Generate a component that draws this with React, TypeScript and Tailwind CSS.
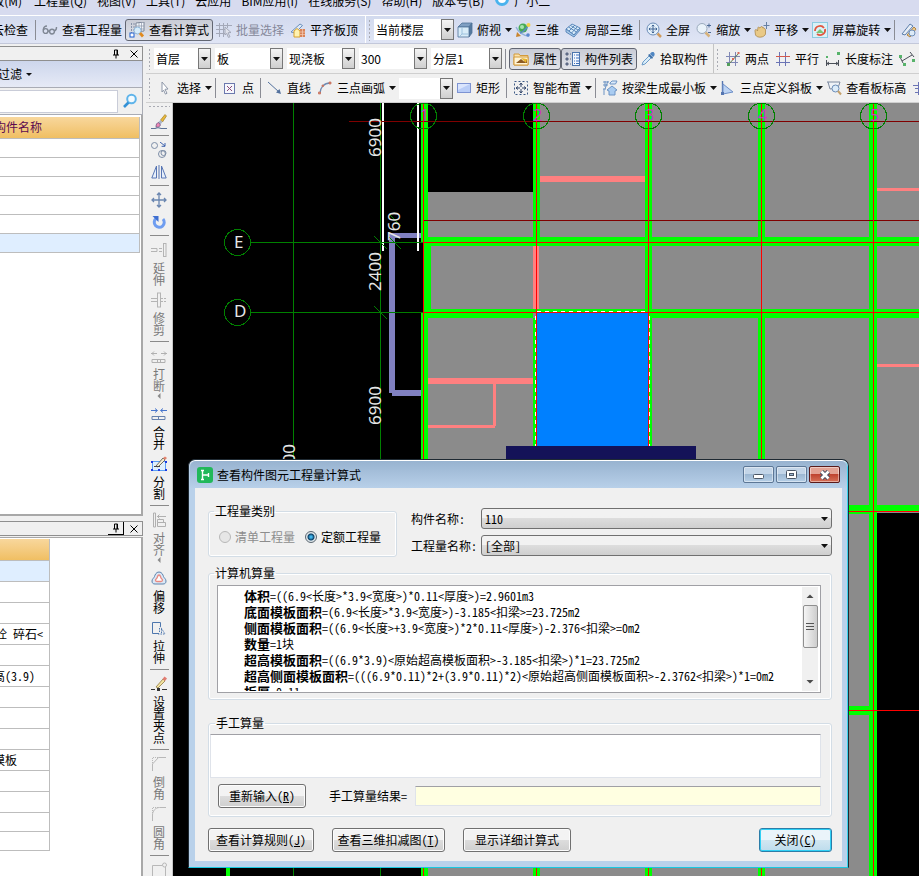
import type { ReactNode } from "react";
import clsx from "clsx";

/* ---------- Icons ---------- */

const icons: Record<string, ReactNode> = {
  glasses: (
    <g fill="none" stroke="#7f8794" strokeWidth="1.4">
      <circle cx="3.6" cy="9" r="2.4" />
      <circle cx="10" cy="9.6" r="2.4" />
      <path d="M1.3 8C1.5 5.5 3 4 5 4M6 9l1.6.3M12.3 9c1.5-.5 2.3-2 2.2-4" />
    </g>
  ),
  calc: (
    <g>
      <path d="M2.5 1v12M5 1v8" stroke="#8793a8" strokeDasharray="2 1" />
      <path d="M7 1l8-1v9l-8 1z" fill="#f3f6fb" stroke="#7b8597" />
      <path d="M7 4h8M7 7h8M10 1v9M12.500 1v9" stroke="#8e98aa" strokeWidth=".7" />
      <rect x="1" y="11" width="4" height="4" fill="#fff" stroke="#1d5fd0" />
      <circle cx="8.500" cy="8.500" r="3.500" fill="#d7ecfa" stroke="#8fb6d8" />
      <path d="M11 11l3 3.500" stroke="#e08a1e" strokeWidth="2.800" />
    </g>
  ),
  batch: (
    <g fill="none" stroke="#a3a8b8">
      <path d="M0 3.500h16M0 7.500h9M0 11.500h9M3.500 1v14M7.500 1v14M11.500 1v5" />
      <path d="M9 5l6 5.500-3 .3 2 4-1.600.6-1.700-4L9 13z" fill="#dfe2ec" />
    </g>
  ),
  house: (
    <g>
      <path d="M1 10l9-8 2.500 1.500L5 11z" fill="#dfe9f5" stroke="#6a8fbd" />
      <path d="M4 15V9l3-2.500L10 9v6z" fill="#fff3b0" stroke="#d9a12a" />
      <path d="M10 7h5v8h-5z" fill="#d98357" />
      <path d="M10 10h5M10 12.500h5M12.500 7v8" stroke="#f3cdb8" strokeWidth=".7" />
    </g>
  ),
  cube: (
    <g stroke="#4f7298" strokeWidth=".8">
      <path d="M1 5l4-4h10l-3 4z" fill="#7f9fc2" />
      <path d="M12 5l3-4v10l-3 4z" fill="#55799f" />
      <path d="M1 5h11v10H1z" fill="#d8ecf8" />
      <path d="M5 6v6h6M5 12l-3 3" fill="none" stroke="#8fb8d6" />
    </g>
  ),
  orbit: (
    <g>
      <circle cx="8" cy="6" r="4.500" fill="#46ab55" />
      <circle cx="7" cy="5" r="2" fill="#a7e3ae" />
      <path d="M1 5c2 5 8 9 13 9" fill="none" stroke="#8fb0d8" strokeWidth="1.400" />
      <path d="M5 11c3-1 7-5 9-9" fill="none" stroke="#5b8ac4" strokeWidth="1.600" />
      <circle cx="13.500" cy="3" r="2" fill="#f3d24b" />
      <circle cx="13" cy="13" r="1.800" fill="#5b87cf" />
      <path d="M1 15l1-5 4 4z" fill="#c9852f" />
    </g>
  ),
  part3d: (
    <g fill="#d8ebf9" stroke="#4f7fb5" strokeWidth=".9">
      <path d="M1 7l6-5 8 4-6 7z" />
      <path d="M1 7v3l8 5 6-7V6l-6 7z" fill="#a9cbe9" />
      <path d="M3.500 5l8 5M5.500 3.500l7.500 4.500M4 9l6-6M6.500 11l6-6.500" fill="none" />
    </g>
  ),
  full: (
    <g>
      <circle cx="7" cy="7" r="6" fill="#e5f1fb" stroke="#6c8db8" />
      <path d="M7 3v8M3 7h8M5.700 4.200L7 3l1.300 1.200M5.700 9.800L7 11l1.300-1.200M4.200 5.700L3 7l1.200 1.300M9.800 5.700L11 7l-1.200 1.300" fill="none" stroke="#3f6393" />
      <path d="M11.500 11.500L15 15" stroke="#cf9b5d" strokeWidth="2.500" />
    </g>
  ),
  zoom: (
    <g>
      <circle cx="6" cy="6.500" r="5" fill="#e9f2fa" stroke="#9aaabd" />
      <path d="M9.500 10.500l4 4" stroke="#d6b27a" strokeWidth="2.500" />
      <path d="M11 3.500h4M13 1.500v4M12 10.500h3" stroke="#4c6b96" />
    </g>
  ),
  hand: (
    <g>
      <path d="M1 9c0-2 1.500-2 2.500 0L4 5.500c.5-1 1.500-.5 1.500.5L7 5c.7-1 1.700-.5 1.500.7 1-.7 1.600 0 1.500 1 1-.3 1.500.3 1.500 1.300V12c-1 3.500-8 4.500-10 1z" fill="#e9c987" stroke="#ad8a4c" strokeWidth=".8" />
      <path d="M12.500 0v7M9.500 3.500h6" stroke="#6680a5" />
    </g>
  ),
  rotate: (
    <g>
      <rect x=".5" y=".5" width="15" height="15" fill="#d9f1f7" stroke="#8ccbe0" />
      <path d="M3 9a5 5 0 019-3" fill="none" stroke="#e2553f" strokeWidth="1.800" />
      <path d="M13 7a5 5 0 01-8 5" fill="none" stroke="#e2553f" strokeWidth="1.800" />
      <path d="M4 11l4-4 4 4z" fill="#7cc576" />
    </g>
  ),
  wand: (
    <g>
      <path d="M1 12l8-10 3 2-8 9z" fill="#e8eef6" stroke="#5d7fab" />
      <path d="M6 13l7-8 2 2-6 8z" fill="#f0c987" stroke="#ae8443" />
      <circle cx="11" cy="11" r="3" fill="#dceaf7" stroke="#6f8fb8" />
    </g>
  ),
  props: (
    <g>
      <path d="M1 3h5l1 1.500h8V14H1z" fill="#fbe3ae" stroke="#d39a3a" />
      <path d="M1 6h14v8H1z" fill="#fff4d6" stroke="#d39a3a" />
      <path d="M3 12l5-4 3 2.500 3-2.500v4z" fill="#8d5a22" />
      <path d="M8 7l6 1-1 4z" fill="#e8b52b" />
    </g>
  ),
  list: (
    <g>
      <path d="M1 2h2v2H1zM1 7h2v2H1zM1 12h2v2H1zM5 3h1M5 8h1M5 13h1" fill="#5e6b86" stroke="#5e6b86" />
      <rect x="7.500" y="1.500" width="7" height="13" fill="#f4f8fd" stroke="#4d76ad" />
      <path d="M9 4h1M11 4h3M9 7h1M11 7h3M9 10h1M11 10h3M9 12.500h1M11 12.500h3" stroke="#3c6fc0" />
    </g>
  ),
  dropper: (
    <g>
      <path d="M2 14l1-3 6-6 2 2-6 6z" fill="#d9edf9" stroke="#6d9cc8" />
      <path d="M8 4l1.500-1L13 6.500 12 8z" fill="#3d6ea6" />
      <path d="M10 3c1-2 3-2.500 4-1.500S15 5 13 6z" fill="#5187c2" />
    </g>
  ),
  twoPoint: (
    <g fill="none">
      <path d="M1 5.500h14M1 11.500h12M4.500 1v14M10.500 1v14" stroke="#8088b5" />
      <path d="M3 14L14 2" stroke="#5e7a4a" />
      <path d="M2 12h3v3H2z" fill="#54a05c" />
      <path d="M7 7h2v2H7zM12.500 1h2v2h-2z" fill="#d86b5a" />
    </g>
  ),
  parallel: (
    <g fill="none" stroke="#6b74b5">
      <path d="M4.500 1v14M10.500 1v14M1 11.500h14" />
      <path d="M1 5.500h14" stroke="#d4594c" />
    </g>
  ),
  length: (
    <g>
      <path d="M1.500 9v6M13.500 9v6M2 12.500h11M4 11l-2 1.500L4 14M11 11l2 1.500-2 1.500" fill="none" stroke="#4a4f58" />
      <path d="M1 5h2v2H1zM12 1h3v3h-3z" fill="#57b36a" />
    </g>
  ),
  slant: (
    <g>
      <path d="M1 6l3 6M11 1l4 5M3 10l10-6" fill="none" stroke="#4a4f58" />
      <path d="M0 4h3v3H0zM4 12h3v3H4zM13 8h3v3h-3z" fill="#57b36a" />
    </g>
  ),
  cursor: <path d="M5 2l6 7-3 .3 2 4-1.600.8-1.800-4L5 12z" fill="#fff" stroke="#8e97a8" />,
  point: (
    <g fill="none">
      <rect x="2.500" y="3.500" width="10" height="10" fill="#f6f7fc" stroke="#6c79ae" />
      <path d="M5 6l5 5M10 6l-5 5" stroke="#8a4a78" />
    </g>
  ),
  line: (
    <g>
      <path d="M1 2l11 10" stroke="#52709d" fill="none" />
      <path d="M14 14l-5-1.500 3.500-3.500z" fill="#52709d" />
    </g>
  ),
  arc: (
    <g fill="none">
      <path d="M3 13C3 8 7 3 13 3" stroke="#6f8bb2" strokeWidth="1.300" />
      <path d="M1.500 12h2v2h-2zM5 5h1.500v1.500H5zM12 2h2v2h-2z" fill="#d98b76" stroke="#c46b56" strokeWidth=".7" />
    </g>
  ),
  rect: (
    <g>
      <rect x="1.500" y="3.500" width="13" height="9" fill="#b9cdf7" stroke="#7d93d2" />
      <path d="M2 4h12L2 10z" fill="#dae5fd" />
    </g>
  ),
  smart: (
    <g fill="none">
      <rect x="1.500" y="1.500" width="13" height="13" stroke="#3d5a86" strokeDasharray="2 2" />
      <path d="M8 3v4M8 9v4M3 8h4M9 8h4M6.500 5L8 3l1.500 2M6.500 11L8 13l1.500-2M5 6.500L3 8l2 1.500M11 6.500L13 8l-2 1.500" stroke="#33476b" />
    </g>
  ),
  beam: (
    <g fill="none" stroke="#6d94c4">
      <path d="M1 2h6M1 5h5M3 1v6M1 9h3M6 1l-3 8M2 9v6" />
      <path d="M8 3l2-2h5l-1.500 3H8z" fill="#dbeafa" />
      <path d="M5 10l5-4 5 4-2 1v4H7v-4z" fill="#a9ccf1" />
    </g>
  ),
  slope: (
    <g>
      <path d="M2.500 1v13" stroke="#5575b0" strokeWidth="1.400" />
      <path d="M3 4l10 8-10 2z" fill="#bcd3f3" stroke="#6e90c9" />
      <path d="M1 12h3v3H1z" fill="#5575b0" />
    </g>
  ),
  height: (
    <g>
      <path d="M1 2h13M2 2l2 7 8-1 2-6" fill="#eef2f7" stroke="#7d8aa0" />
      <circle cx="9.500" cy="8.500" r="3.500" fill="#dcecf9" stroke="#6b8db8" />
      <path d="M12 11l3 3.500" stroke="#c4a06b" strokeWidth="2" />
    </g>
  ),
  grid: <path d="M3 8.500h12M3 12.500h12M6.500 2v13M11.500 5v10M1 5.500h8" fill="none" stroke="#6b74b5" />,
  search: (
    <g fill="none">
      <circle cx="9.500" cy="6" r="4.300" fill="#f2faff" stroke="#5fb4ea" strokeWidth="2" />
      <path d="M6.500 9.500L2 14" stroke="#3391d6" strokeWidth="2.600" />
    </g>
  ),
  brush: (
    <g>
      <path d="M9.500 6L14 .5 15.500 2 11.500 8z" fill="#e9b93a" stroke="#947222" strokeWidth=".6" />
      <path d="M7 8.500L9.500 6l2 2L9 11z" fill="#aab5c8" />
      <path d="M5 13c0-3 1-4 2.500-4.500L9.500 11C8.500 13 7 13.500 5 13z" fill="#ee86b3" stroke="#5f4d7c" strokeWidth=".7" />
      <path d="M0 14.500h4M10 14.500h6M4 14.500c2-1 4-1 6 0" fill="none" stroke="#5d7396" strokeWidth="1.200" />
    </g>
  ),
  copy: (
    <g fill="none" stroke="#7d8da6">
      <circle cx="3.500" cy="3.500" r="3" />
      <circle cx="11" cy="12" r="3.500" />
      <circle cx="12.500" cy="11" r="2.500" />
      <path d="M9 0l5 4M14 1v3.300h-3.400" stroke="#3e62ad" />
    </g>
  ),
  mirror: (
    <g fill="#e8f0fb" stroke="#5876b4">
      <path d="M5.500 2v12H.8zM10.500 2v12h4.700z" />
      <path d="M8 1v14" />
    </g>
  ),
  move: <path d="M8 1v14M1 8h14M6 3l2-2 2 2M6 13l2 2 2-2M3 6L1 8l2 2M13 6l2 2-2 2" fill="none" stroke="#6a86b0" strokeWidth="1.300" />,
  turn: (
    <g>
      <path d="M12 5a5 5 0 11-7-.5" fill="none" stroke="#6f9df0" strokeWidth="3" />
      <path d="M1.500 2h6v6z" fill="#3f6fd0" />
    </g>
  ),
  extend: (
    <g fill="none" stroke="#b4b4b4">
      <path d="M0 6.500h6v3H0M8 6.500h3M8 9.500h3" />
      <rect x="12.500" y="1.500" width="2.500" height="13" />
    </g>
  ),
  trim: (
    <g fill="none" stroke="#b4b4b4">
      <path d="M0 6.500h6M0 9.500h6" />
      <path d="M10 6.500h6M10 9.500h6" strokeDasharray="2 1" />
      <rect x="6.500" y="1" width="3" height="14" />
    </g>
  ),
  breakIt: (
    <g fill="none" stroke="#b0b0b0">
      <path d="M0 5.500h6M3 3.500l-2 2 2 2M10 5.500h6M13 3.500l2 2-2 2" />
      <path d="M1 11.500h13v3H1zM6.500 11v4M9.500 11v4" />
    </g>
  ),
  merge: (
    <g fill="none" stroke="#4775cc">
      <path d="M0 4.500h6M4 2.500l2.500 2L4 6.500M16 4.500h-6M12 2.500l-2.500 2 2.500 2" />
      <path d="M1 10.500h13v3H1zM7.500 10v4" stroke="#6681ad" />
    </g>
  ),
  split: (
    <g>
      <path d="M1.500 5.500h13v9h-13z" fill="#e1f0fd" stroke="#5aa0f5" />
      <path d="M0 5h2v2H0zM14 5h2v2h-2zM0 13h2v2H0zM14 13h2v2h-2zM7 13h2v2H7z" fill="#1e3be0" />
      <path d="M5 10l7-8 2 2-7 7z" fill="#f4ecd2" stroke="#4c4c44" strokeWidth=".8" />
      <path d="M12 2l2-1.500L16 2l-2 2z" fill="#e2836e" />
      <path d="M3 10.500h6" stroke="#444" />
    </g>
  ),
  align: (
    <g fill="none" stroke="#b0b0b0">
      <path d="M2.500 1v14h2V1zM6 4.500h9M8.500 2.500l-2 2 2 2M6.500 7.500h6v3h-6zM6.500 10.500h8v4h-8z" />
    </g>
  ),
  offset: (
    <g fill="none">
      <path d="M8 2c3 0 4 3 4.500 4.500S15 9 15 11s-1 3-3 3H4c-2 0-3-1-3-3s2-3 2.500-4.500S5 2 8 2z" fill="#dbe8f6" stroke="#5e83ad" />
      <path d="M8 5c1.500 0 1.500 2 2 3s1.500 1 1.500 2-.5 1.500-1.500 1.500H6c-1 0-1.500-.5-1.500-1.500S5.500 9 6 8s.5-3 2-3z" fill="#fff" stroke="#e88a82" strokeWidth="1.300" />
    </g>
  ),
  stretch: (
    <g fill="none" stroke="#4d76ad">
      <path d="M9.500 2.500h-8v11H8M9.500 2.500v4" />
      <path d="M9 6l5 8H7M8.500 8v5M10.500 9v4" strokeDasharray="1.500 1" />
    </g>
  ),
  grip: (
    <g>
      <path d="M5 11l7-8 2 2-7 7z" fill="#f2e29e" stroke="#826c33" strokeWidth=".7" />
      <path d="M11.500 3l2-2.500L16 2.500 14 5z" fill="#e27c72" />
      <path d="M0 13.500h4M11 13.500h5" stroke="#333" />
      <path d="M6 12h3v3H6z" fill="#333" />
    </g>
  ),
  chamfer: (
    <g fill="none" stroke="#b8b8b8">
      <path d="M1.500 15V8l6-6.500H15" />
      <path d="M1.500 7V1.500H7" strokeDasharray="1 1" />
    </g>
  ),
  fillet: (
    <g fill="none" stroke="#b8b8b8">
      <path d="M1.500 15V9c0-4 3-7.500 7-7.500H15" />
      <path d="M1.500 7V1.500H7" strokeDasharray="1 1" />
    </g>
  ),
  corner: (
    <g fill="none" stroke="#b8b8b8">
      <path d="M1.500 16V3.500H11M14.500 5v11" />
      <circle cx="13.500" cy="3" r="2" />
    </g>
  ),
  user: (
    <g>
      <circle cx="8" cy="8" r="7" fill="#4ab3ee" />
      <circle cx="8" cy="8" r="4" fill="#fff" />
      <path d="M5 8h6" stroke="#4ab3ee" />
    </g>
  ),
};

function Icon({ name }: { name: string }) {
  return (
    <svg viewBox="0 0 16 16" className="size-4 shrink-0" aria-hidden="true">
      {icons[name]}
    </svg>
  );
}

function Caret() {
  return (
    <svg viewBox="0 0 7 4" className="h-1 w-[7px] shrink-0" aria-hidden="true">
      <path d="M0 0h7L3.500 4z" fill="#111" />
    </svg>
  );
}

/* ---------- Toolbars ---------- */

interface ToolProps {
  icon?: string;
  label?: string;
  menu?: boolean;
  pressed?: boolean;
  disabled?: boolean;
}

function Tool({ icon, label, menu, pressed, disabled }: ToolProps) {
  return (
    <button
      type="button"
      disabled={disabled}
      aria-pressed={pressed}
      aria-label={label ?? icon}
      className={clsx(
        "flex h-[22px] shrink-0 items-center gap-1 pl-[3px]",
        !menu && "pr-[3px]",
        pressed && "rounded-[3px] border border-[#626672] bg-linear-to-b from-[#c9ccd6] to-[#e2e4ea]",
        disabled && "text-[#85889a]",
      )}
    >
      {icon && <Icon name={icon} />}
      {label && <span>{label}</span>}
      {menu && <Caret />}
    </button>
  );
}

function Sep() {
  return <div className="mx-[3px] h-5 w-px shrink-0 bg-[#8a8c94]" />;
}

function Grip() {
  return <div className="mr-[3px] ml-[2px] h-[22px] w-[3px] shrink-0 bg-[radial-gradient(#a9abb3_1px,transparent_1px)] bg-size-[3px_4px]" />;
}

function Combo({ label, value, className }: { label: string; value: string; className: string }) {
  return (
    <div className={clsx("relative h-[21px] shrink-0 bg-white", className)}>
      <select aria-label={label} className="size-full appearance-none pr-4 pl-[2px] outline-none">
        <option>{value}</option>
      </select>
      <span className="pointer-events-none absolute inset-y-0 right-0 flex w-[13px] items-center justify-center border border-[#777] bg-linear-to-b from-[#f4f4f4] to-[#cfcfcf]">
        <Caret />
      </span>
    </div>
  );
}

const menus = ["工程量(Q)", "视图(V)", "工具(T)", "云应用", "BIM应用(I)", "在线服务(S)", "帮助(H)", "版本号(B)"];

function MenuBar() {
  return (
    <nav className="flex h-[15px] shrink-0 items-end gap-[10px] overflow-hidden bg-[#d7dbef] pb-2 leading-3">
      <a href="#modify" className="flex w-6 justify-end pr-[2px]">修改(M)</a>
      {menus.map((m) => (
        <a key={m} href={`#${m}`} className="shrink-0">{m}</a>
      ))}
      <a href="#user" className="flex shrink-0 items-end gap-1">
        <Icon name="user" />
        广小二
      </a>
    </nav>
  );
}

function MainToolbar() {
  return (
    <div className="flex h-[29px] shrink-0 items-center overflow-hidden border-t border-b border-t-white border-b-[#c3c8da] bg-linear-to-b from-[#d2daee] to-[#e0e5f5]">
      <button type="button" className="flex w-8 shrink-0 justify-end pr-1">云检查</button>
      <Sep />
      <Tool icon="glasses" label="查看工程量" />
      <Tool icon="calc" label="查看计算式" pressed />
      <Tool icon="batch" label="批量选择" disabled />
      <Tool icon="house" label="平齐板顶" />
      <div className="ml-1 h-full w-px shrink-0 bg-white" />
      <Grip />
      <Combo label="当前楼层" value="当前楼层" className="w-20" />
      <Tool icon="cube" label="俯视" menu />
      <Tool icon="orbit" label="三维" />
      <Tool icon="part3d" label="局部三维" />
      <Sep />
      <Tool icon="full" label="全屏" />
      <Tool icon="zoom" label="缩放" menu />
      <Tool icon="hand" label="平移" menu />
      <Tool icon="rotate" label="屏幕旋转" menu />
      <Sep />
      <Tool icon="wand" />
    </div>
  );
}

function FloorToolbar() {
  return (
    <div className="flex h-[30px] shrink-0 items-center overflow-hidden border-b border-[#cfcfcf]">
      <Grip />
      <div className="flex shrink-0 gap-1">
        <Combo label="楼层" value="首层" className="w-[57px]" />
        <Combo label="构件类别" value="板" className="w-[68px]" />
        <Combo label="构件类型" value="现浇板" className="w-[68px]" />
        <Combo label="构件" value="300" className="w-[68px]" />
        <Combo label="分层" value="分层1" className="w-[71px]" />
      </div>
      <Sep />
      <Tool icon="props" label="属性" pressed />
      <Tool icon="list" label="构件列表" pressed />
      <Tool icon="dropper" label="拾取构件" />
      <div className="ml-[2px] h-full w-px shrink-0 bg-[#c4c4c4]" />
      <Grip />
      <Tool icon="twoPoint" label="两点" />
      <Tool icon="parallel" label="平行" />
      <Tool icon="length" label="长度标注" />
      <Tool icon="slant" />
    </div>
  );
}

function DrawToolbar() {
  return (
    <div className="flex h-[29px] shrink-0 items-center overflow-hidden border-b border-[#cfcfcf]">
      <Grip />
      <Tool icon="cursor" label="选择" menu />
      <Sep />
      <Tool icon="point" label="点" />
      <Sep />
      <Tool icon="line" label="直线" />
      <Tool icon="arc" label="三点画弧" menu />
      <Combo label="画弧方式" value="" className="ml-[3px] w-[54px]" />
      <Tool icon="rect" label="矩形" />
      <Sep />
      <Tool icon="smart" label="智能布置" menu />
      <Sep />
      <Tool icon="beam" label="按梁生成最小板" menu />
      <Tool icon="slope" label="三点定义斜板" menu />
      <Tool icon="height" label="查看板标高" />
      <Tool icon="grid" />
    </div>
  );
}

const editTools: (ToolProps | null)[] = [
  { icon: "brush" },
  null,
  { icon: "copy" },
  { icon: "mirror" },
  null,
  { icon: "move" },
  { icon: "turn" },
  null,
  { icon: "extend", label: "延伸", disabled: true },
  { icon: "trim", label: "修剪", disabled: true },
  null,
  { icon: "breakIt", label: "打断", disabled: true, menu: true },
  { icon: "merge", label: "合并" },
  { icon: "split", label: "分割" },
  null,
  { icon: "align", label: "对齐", disabled: true, menu: true },
  { icon: "offset", label: "偏移" },
  { icon: "stretch", label: "拉伸" },
  null,
  { icon: "grip", label: "设置夹点" },
  null,
  { icon: "chamfer", label: "倒角", disabled: true },
  { icon: "fillet", label: "圆角", disabled: true },
  null,
  { icon: "corner" },
];

function EditToolbar() {
  return (
    <div className="flex w-[27px] shrink-0 flex-col items-center overflow-hidden border-r border-[#c8c8c8]">
      <div className="mt-[2px] mb-[3px] h-[3px] w-[22px] shrink-0 bg-[radial-gradient(#a9abb3_1px,transparent_1px)] bg-size-[4px_3px]" />
      {editTools.map((t, i) =>
        t === null ? (
          <div key={i} className="mt-[2px] mb-[3px] h-px w-[19px] shrink-0 bg-[#8a8a8a]" />
        ) : (
          <button
            key={i}
            type="button"
            disabled={t.disabled}
            aria-label={t.label ?? t.icon}
            className={clsx("flex shrink-0 flex-col items-center py-[3px]", t.disabled && "text-[#7a7a7a]")}
          >
            <Icon name={t.icon!} />
            {t.label && <span className="mt-1 w-3 leading-3 break-all whitespace-normal">{t.label}</span>}
            {t.menu && (
              <svg viewBox="0 0 4 8" className="h-2 w-1" aria-hidden="true">
                <path d="M3.500 1v6L.5 4z" fill="#8a8a8a" />
              </svg>
            )}
          </button>
        ),
      )}
    </div>
  );
}

/* ---------- Left panels ---------- */

function PanelHead({ raised }: { raised?: boolean }) {
  return (
    <div className="flex h-[15px] shrink-0 items-center justify-end gap-1 border border-l-0 border-[#8f8f8f] pr-[2px]">
      <button
        type="button"
        aria-label="固定"
        className={clsx("flex h-[13px] w-4 items-center justify-center", raised && "border-r border-b border-black")}
      >
        <svg viewBox="0 0 8 10" className="h-[10px] w-2" aria-hidden="true">
          <path d="M2.500 6V1h3v5M1 6h6M4 6v3.500M5 1v5" fill="none" stroke="#000" />
        </svg>
      </button>
      <button type="button" aria-label="关闭面板" className="flex size-3 items-center justify-center">
        <svg viewBox="0 0 8 8" className="size-2" aria-hidden="true">
          <path d="M.5.5l7 7M7.500.5l-7 7" stroke="#000" fill="none" />
        </svg>
      </button>
    </div>
  );
}

function ComponentPanel() {
  return (
    <section className="flex h-[470px] shrink-0 flex-col">
      <PanelHead />
      <button
        type="button"
        className="flex h-[27px] shrink-0 items-center gap-1 border-r border-b border-[#a9acb5] bg-linear-to-b from-[#cdd6ec] to-[#e6eaf6]"
      >
        <span className="flex w-[22px] shrink-0 justify-end">过滤</span>
        <svg viewBox="0 0 6 3" className="h-[3px] w-[6px]" aria-hidden="true">
          <path d="M0 0h6L3 3z" fill="#111" />
        </svg>
      </button>
      <div className="flex h-[27px] shrink-0 items-center border-r border-b border-[#a9acb5]">
        <input aria-label="搜索构件" className="h-[23px] min-w-0 flex-1 border border-l-0 border-[#c9ccd8] bg-white outline-none" />
        <button type="button" aria-label="搜索" className="flex w-6 justify-center">
          <Icon name="search" />
        </button>
      </div>
      <div className="flex-1 border-r-2 border-b-2 border-[#a8a8a8] bg-white pt-[2px] pr-px">
        <table className="w-full table-fixed border-collapse">
          <thead>
            <tr className="h-[21px] bg-linear-to-b from-[#f8d79c] to-[#f0bf62]">
              <th className="border-r border-b border-[#bdbdbd] p-0 font-normal">
                <div className="flex w-[42px] justify-end whitespace-nowrap text-[#5c0a50]">构件名称</div>
              </th>
            </tr>
          </thead>
          <tbody>
            {[0, 1, 2, 3, 4, 5].map((r) => (
              <tr key={r} className={clsx("h-[19px]", r === 5 && "bg-[#dfeeff]")}>
                <td className="border-r border-b border-[#bdbdbd] p-0" />
              </tr>
            ))}
          </tbody>
        </table>
      </div>
    </section>
  );
}

const propRows = [
  { text: "", pad: "" },
  { text: "", pad: "" },
  { text: "", pad: "" },
  { text: "现浇砼 碎石<", pad: "pr-[6px]" },
  { text: "", pad: "" },
  { text: "层顶标高(3.9)", pad: "pr-[14px]" },
  { text: "", pad: "" },
  { text: "", pad: "" },
  { text: "", pad: "" },
  { text: "组合模板", pad: "pr-8" },
  { text: "", pad: "" },
  { text: "", pad: "" },
  { text: "", pad: "" },
  { text: "", pad: "" },
];

function PropertyPanel() {
  return (
    <section className="mt-[5px] flex min-h-0 flex-1 flex-col">
      <PanelHead raised />
      <div className="mt-px flex-1 overflow-hidden border-t border-r-2 border-[#a8a8a8] bg-white pt-px">
        <table className="w-[50px] table-fixed border-collapse [font-family:'Noto_Sans_Mono_CJK_SC','Noto_Sans_CJK_SC',monospace]">
          <thead>
            <tr className="h-[21px] bg-linear-to-b from-[#f8d79c] to-[#f0bf62]">
              <th className="border-r border-b border-[#bdbdbd] p-0" />
            </tr>
          </thead>
          <tbody>
            {propRows.map((row, i) => (
              <tr key={i} className={clsx(i > 11 ? "h-[19px]" : "h-[21px]", i === 0 && "bg-[#dfeeff]")}>
                <td className="border-r border-b border-[#bdbdbd] p-0">
                  <div className={clsx("flex justify-end overflow-hidden leading-4 whitespace-nowrap", row.pad)}>{row.text}</div>
                </td>
              </tr>
            ))}
          </tbody>
        </table>
      </div>
    </section>
  );
}

/* ---------- Drawing ---------- */

const axes = [
  { n: "1", x: 423.5 },
  { n: "2", x: 536.5 },
  { n: "3", x: 648.5 },
  { n: "4", x: 761.5 },
  { n: "5", x: 873.5 },
];

const dims = [
  { t: "6900", x: 381, y: 157 },
  { t: "760", x: 400, y: 241 },
  { t: "2400", x: 381, y: 291 },
  { t: "6900", x: 381, y: 425 },
  { t: "6900", x: 295, y: 483 },
];

function Plan() {
  return (
    <svg
      viewBox="173 103 746 773"
      preserveAspectRatio="xMinYMin slice"
      shapeRendering="crispEdges"
      className="absolute inset-0 size-full [font-family:'Noto_Sans',sans-serif]"
      aria-label="平面图"
    >
      {/* slabs */}
      <path d="M424 103h495v410h-42v363H424z" fill="#8b8b8b" />
      <path d="M428 103h105v89H428z" fill="#000" />

      {/* walls */}
      <g fill="#ff8080">
        <path d="M540 176h105v6H540zM877 188h42v3h-42zM877 364h42v3h-42z" />
        <path d="M533 246h6v63h-6zM428 378h105v6H428zM493 384h3v42h-3zM428 425h67v3h-67z" />
      </g>
      <path d="M389 233h32v5h-26v155h-6zM392 390h29v6h-29z" fill="#8080c0" />
      <path d="M382 103h2v148h-2zM417 103h2v148h-2z" fill="#fff" />

      {/* beams */}
      <g fill="#0f0">
        <path d="M421 103h7v139h-7zM424 242h7v70h-7zM421 312h7v564h-7z" />
        <path d="M533 103h7v137h-7zM533 318h3v135h-3zM533 860h7v16h-7z" />
        <path d="M645 103h7v209h-7zM649 312h3v140h-3zM645 860h7v16h-7z" />
        <path d="M758 103h7v137h-7zM758 309h7v567h-7zM869 103h8v773h-8z" />
        <path d="M424 237h495v9H424zM424 309h109v9H424zM533 309h119v3H533zM650 309h269v9H650z" />
        <path d="M840 505h79v6h-79zM840 511h29v3h-29zM840 706h37v9h-37zM226 868h4v8h-4z" />
      </g>

      {/* selected slab */}
      <path d="M537 313h111v140H537z" fill="#0080ff" />
      <path d="M537 311.500h111M535.500 316v136M649.500 316v136" stroke="#fff" strokeDasharray="4 4" fill="none" />

      {/* axis lines */}
      <path d="M293.500 103v773M380.500 103v773M250 242.500h174M250 312.500h174" stroke="#008000" fill="none" />
      <path d="M349 121.500h570M424 220.500h495" stroke="#800000" fill="none" />
      <path d="M424 242.500h495M424 312.500h495M840 511.500h79M840 710.500h79" stroke="#f00" fill="none" />
      {axes.map((a) => (
        <path key={a.n} d={`M${a.x} 103v773`} stroke="#f00" fill="none" />
      ))}
      <path d="M374 236l13 13M374 306l13 13M388 236l13 13M390 215l11 11" stroke="#008000" fill="none" />
      <path d="M506 446h190v14H506z" fill="#141258" />

      {axes.map((a) => (
        <g key={a.n}>
          <circle cx={a.x} cy="116" r="13" fill="none" stroke="#008000" />
          <text x={a.x + 1} y="121" fontSize="17" textAnchor="middle" fill="#c43cc4">
            {a.n}
          </text>
        </g>
      ))}
      <g fill="none" stroke="#008000">
        <circle cx="237.500" cy="242.500" r="13" />
        <circle cx="237.500" cy="312.500" r="13" />
      </g>
      <g fill="#e6e6e6" fontSize="17">
        <text x="234" y="248">E</text>
        <text x="234" y="317">D</text>
        {dims.map((d, i) => (
          <text key={i} transform={`translate(${d.x} ${d.y}) rotate(-90)`}>
            {d.t}
          </text>
        ))}
      </g>
    </svg>
  );
}

/* ---------- Dialog ---------- */

const formulas = [
  ["体积", "=((6.9<长度>*3.9<宽度>)*0.11<厚度>)=2.9601m3"],
  ["底面模板面积", "=(6.9<长度>*3.9<宽度>)-3.185<扣梁>=23.725m2"],
  ["侧面模板面积", "=((6.9<长度>+3.9<宽度>)*2*0.11<厚度>)-2.376<扣梁>=0m2"],
  ["数量", "=1块"],
  ["超高模板面积", "=((6.9*3.9)<原始超高模板面积>-3.185<扣梁>)*1=23.725m2"],
  ["超高侧面模板面积", "=(((6.9*0.11)*2+(3.9*0.11)*2)<原始超高侧面模板面积>-2.3762<扣梁>)*1=0m2"],
  ["板厚", "=0.11"],
];

const group = "min-w-0 rounded-[3px] border border-[#d3dde6] shadow-[inset_0_0_0_1px_#fff]";
const legend = "ml-[5px] px-px leading-3";
const pushButton =
  "h-6 shrink-0 rounded-[3px] border border-[#707070] bg-linear-to-b from-[#f3f3f3] from-50% via-[#dddddd] via-50% to-[#cfcfcf] shadow-[inset_0_0_0_1px_#fcfcfc]";

function DialogSelect({ id, value }: { id: string; value: string }) {
  return (
    <div className="relative">
      <select
        id={id}
        className="h-[21px] w-full appearance-none rounded-[3px] border border-[#707070] bg-linear-to-b from-[#f2f2f2] from-50% via-[#dddddd] via-50% to-[#cfcfcf] pl-[3px] outline-none"
      >
        <option>{value}</option>
      </select>
      <span className="pointer-events-none absolute inset-y-0 right-1 flex items-center">
        <Caret />
      </span>
    </div>
  );
}

function Radio({ label, checked, disabled }: { label: string; checked?: boolean; disabled?: boolean }) {
  return (
    <label className={clsx("flex items-center gap-1", disabled && "text-[#8d8d8d]")}>
      <input
        type="radio"
        name="quantity-kind"
        defaultChecked={checked}
        disabled={disabled}
        className="size-3 appearance-none rounded-full border border-[#8e8f8f] bg-white checked:border-[#5a6670] checked:bg-[radial-gradient(#3fb4ea_0_1px,#0b3f66_3px,#dfe6ea_4px)] disabled:border-[#b8b8b8] disabled:bg-[#e6e6e6]"
      />
      {label}
    </label>
  );
}

function WindowButtons() {
  const base = "flex h-[17px] items-center justify-center rounded-[2px] border shadow-[inset_0_0_0_1px_#ffffff70]";
  const plain = "w-[31px] border-[#5d7796] bg-linear-to-b from-[#c3d5e8] from-50% via-[#9db8d3] via-50% to-[#b6cfe7]";
  return (
    <div className="ml-auto flex gap-[2px]">
      <button type="button" aria-label="最小化" className={clsx(base, plain)}>
        <svg viewBox="0 0 12 8" className="h-2 w-3" aria-hidden="true">
          <rect x=".5" y="3.500" width="10" height="4" rx="1" fill="#fff" stroke="#4c5766" />
        </svg>
      </button>
      <button type="button" aria-label="最大化" className={clsx(base, plain)}>
        <svg viewBox="0 0 12 10" className="h-[10px] w-3" aria-hidden="true">
          <rect x=".5" y=".5" width="10" height="8" rx="1" fill="#fff" stroke="#4c5766" />
          <rect x="3.500" y="3.500" width="4" height="2" fill="#9db8d3" stroke="#4c5766" />
        </svg>
      </button>
      <button
        type="button"
        aria-label="关闭"
        className={clsx(base, "w-[31px] border-[#5a1a1a] bg-linear-to-b from-[#e3a294] from-50% via-[#bf4430] via-50% to-[#d67058]")}
      >
        <svg viewBox="0 0 12 10" className="h-[10px] w-3" aria-hidden="true">
          <path d="M2.500 1.500l7 7M9.500 1.500l-7 7" stroke="#4b4f63" strokeWidth="4.600" />
          <path d="M2.500 1.500l7 7M9.500 1.500l-7 7" stroke="#fff" strokeWidth="2.600" />
        </svg>
      </button>
    </div>
  );
}

function ScrollBar() {
  return (
    <div className="flex w-4 shrink-0 flex-col items-center bg-[#f0f0f0]" aria-hidden="true">
      <svg viewBox="0 0 16 18" className="h-[18px] w-4">
        <path d="M4.500 11h7L8 7.500z" fill="#4b4b4b" />
      </svg>
      <div className="flex h-[43px] w-[15px] items-center justify-center rounded-[2px] border border-[#8f8f8f] bg-linear-to-r from-[#f5f5f5] to-[#cdcdcd]">
        <svg viewBox="0 0 8 8" className="size-2">
          <path d="M0 .5h8M0 3.500h8M0 6.500h8" stroke="#555" />
        </svg>
      </div>
      <svg viewBox="0 0 16 18" className="mt-auto h-[18px] w-4">
        <path d="M4.500 7h7L8 10.500z" fill="#4b4b4b" />
      </svg>
    </div>
  );
}

function FormulaDialog() {
  return (
    <div
      role="dialog"
      aria-labelledby="dialog-title"
      className="absolute top-[356px] left-[15px] w-[661px] rounded-t-[7px] border border-[#1f2a33] border-b-[#19c8e0] bg-[#b9d1ea] px-[6px] pb-[6px] shadow-[inset_0_1px_0_#fff,inset_-1px_0_0_#39d3ec] [font-family:'Noto_Sans_Mono_CJK_SC','Noto_Sans_CJK_SC',monospace]"
    >
      <header className="-mx-[5px] mt-px flex h-[27px] items-center gap-1 rounded-t-[6px] bg-linear-to-b from-[#98b3d0] to-[#b8d0e9] px-[7px] [font-family:'Noto_Sans_CJK_SC',sans-serif]">
        <svg viewBox="0 0 16 16" className="size-4" aria-hidden="true">
          <rect width="16" height="16" rx="3" fill="#21b85a" />
          <path d="M5.500 3v10M5.500 8H11M11.500 6v4M4 3.500h3M4 12.500h3" stroke="#fff" strokeWidth="1.400" fill="none" />
        </svg>
        <h1 id="dialog-title">查看构件图元工程量计算式</h1>
        <WindowButtons />
      </header>

      <div className="bg-[#f0f0f0] pt-[17px] pr-[10px] pb-[9px] pl-[13px]">
        <div className="flex gap-[14px]">
          <fieldset className={clsx(group, "w-[189px] shrink-0")}>
            <legend className={legend}>工程量类别</legend>
            <div className="flex h-[39px] items-center gap-[10px] pl-[10px]">
              <Radio label="清单工程量" disabled />
              <Radio label="定额工程量" checked />
            </div>
          </fieldset>
          <div className="grid flex-1 grid-cols-[70px_1fr] items-center gap-y-[6px] pt-[3px] pb-px">
            <label htmlFor="component">构件名称:</label>
            <DialogSelect id="component" value="110" />
            <label htmlFor="quantity">工程量名称:</label>
            <DialogSelect id="quantity" value="[全部]" />
          </div>
        </div>

        <fieldset className={clsx(group, "mt-[10px] pt-[6px] pr-[10px] pb-[6px] pl-2")}>
          <legend className="-ml-[3px] px-px leading-3">计算机算量</legend>
          <div className="flex h-[108px] border border-[#a0a0a5] bg-white py-px pr-[2px]">
            <dl className="min-w-0 flex-1 overflow-hidden pt-px pl-[26px] leading-4 whitespace-nowrap">
              {formulas.map(([name, value]) => (
                <div key={name} className="flex">
                  <dt className="text-[13px] leading-4 font-bold">{name}</dt>
                  <dd>{value}</dd>
                </div>
              ))}
            </dl>
            <ScrollBar />
          </div>
        </fieldset>

        <fieldset className={clsx(group, "mt-[17px] pt-[5px] pr-[10px] pb-2 pl-px")}>
          <legend className={legend}>手工算量</legend>
          <textarea aria-label="手工算量" className="block h-11 w-full resize-none border border-[#dfe3ea] border-t-[#a0a0a5] bg-white outline-none" />
          <div className="mt-[6px] flex items-center pl-2">
            <button type="button" className={clsx(pushButton, "w-[88px]")}>
              重新输入(<u>R</u>)
            </button>
            <label htmlFor="result" className="mr-2 ml-[23px]">手工算量结果=</label>
            <input id="result" className="h-5 min-w-0 flex-1 border border-[#dfe3ea] border-t-[#a0a0a5] bg-[#ffffe1] outline-none" />
          </div>
        </fieldset>

        <div className="mt-[11px] flex gap-[18px]">
          <button type="button" className={clsx(pushButton, "w-[106px]")}>
            查看计算规则(<u>J</u>)
          </button>
          <button type="button" className={clsx(pushButton, "w-[113px]")}>
            查看三维扣减图(<u>T</u>)
          </button>
          <button type="button" className={clsx(pushButton, "w-[108px]")}>
            显示详细计算式
          </button>
          <button
            type="button"
            className="ml-auto h-6 w-[73px] rounded-[3px] border border-[#2c7da8] bg-linear-to-b from-[#eaf4fa] from-50% via-[#d2e7f2] via-50% to-[#bddcec] shadow-[inset_0_0_0_1px_#2fd0f5]"
          >
            关闭(<u>C</u>)
          </button>
        </div>
      </div>
    </div>
  );
}

export default function App() {
  return (
    <div className="flex h-screen flex-col overflow-hidden bg-[#f0f0f0] text-xs leading-4 whitespace-nowrap text-black [font-family:'Noto_Sans_CJK_SC',sans-serif]">
      <MenuBar />
      <MainToolbar />
      <div className="flex min-h-0 flex-1">
        <aside className="flex w-[143px] shrink-0 flex-col pt-[2px]">
          <ComponentPanel />
          <PropertyPanel />
        </aside>
        <main className="ml-[3px] flex min-w-0 flex-1 flex-col">
          <FloorToolbar />
          <DrawToolbar />
          <div className="flex min-h-0 flex-1">
            <EditToolbar />
            <div className="relative min-w-0 flex-1 overflow-hidden bg-black">
              <Plan />
              <FormulaDialog />
            </div>
          </div>
        </main>
      </div>
    </div>
  );
}
